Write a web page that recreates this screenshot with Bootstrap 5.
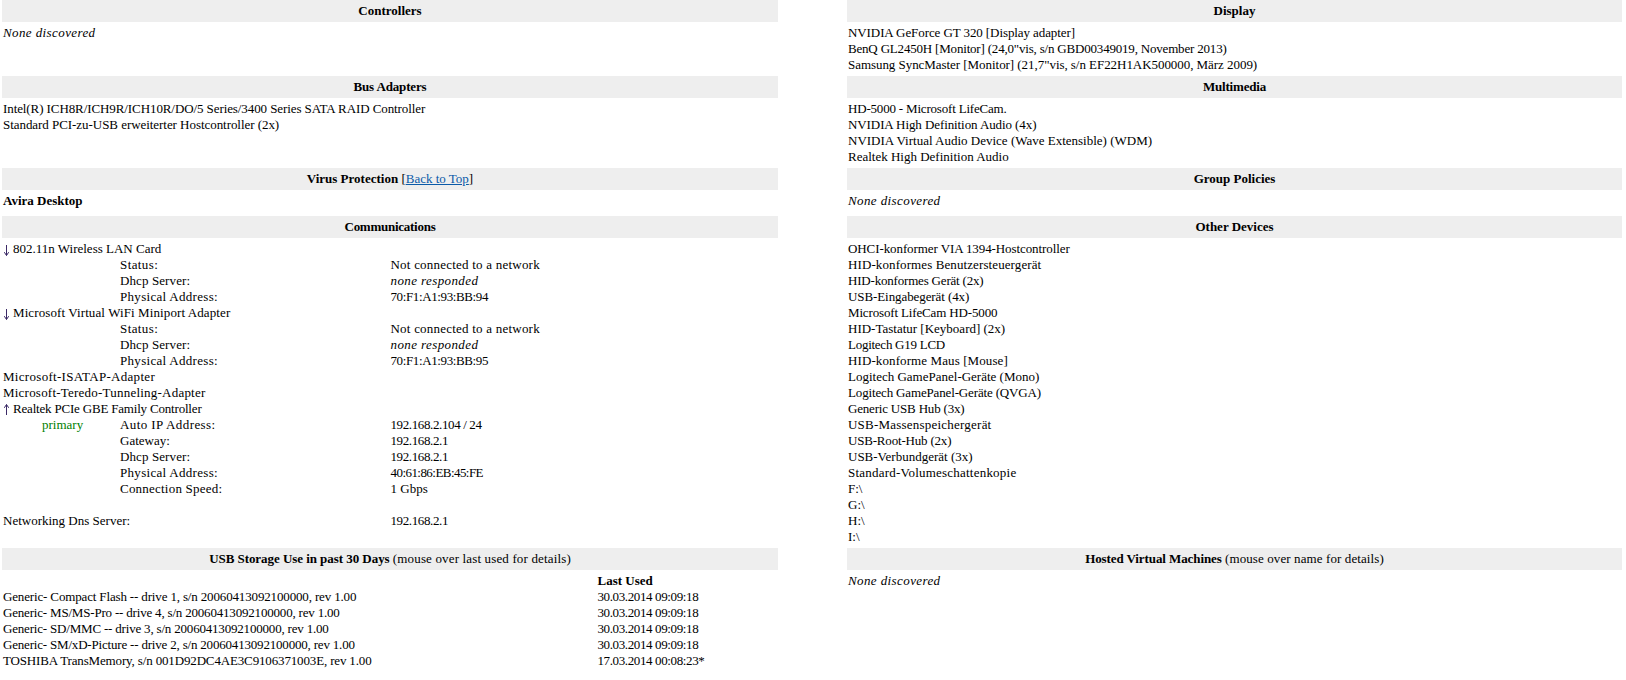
<!DOCTYPE html>
<html lang="en">
<head>
<meta charset="utf-8">
<title>System Information</title>
<link href="https://cdn.jsdelivr.net/npm/bootstrap@5.3.0/dist/css/bootstrap.min.css" rel="stylesheet">
<style>
html, body { background: #fff; }
body { margin: 0; padding: 0; color: #000; font-family: "Liberation Serif", "Times New Roman", serif; font-size: 13px; line-height: 16px; }
.sheet { width: 1626px; }
.pair { display: flex; }
.side-l { width: 776px; margin-left: 2px; }
.side-r { width: 775px; margin-left: 69px; }
.bar { background: #eee; height: 22px; line-height: 22px; text-align: center; }
.bar a { color: #0b5aa8; }
.body-cell { padding: 3px 1px; }
.tall { padding-bottom: 7px; }
.grid-comm { display: grid; grid-template-columns: 39px 78px 270.5px 1fr; }
.grid-comm > div { min-height: 16px; white-space: nowrap; }
.full { grid-column: 1 / -1; }
.span-three { grid-column: 1 / 4; }
.grid-usb { display: grid; grid-template-columns: 594.5px 1fr; }
.arrow-d, .arrow-u { width: 7px; height: 11px; margin-right: 3px; stroke: #3b2a66; fill: none; stroke-width: 1; }
svg.arrow-d { vertical-align: -3px; }
svg.arrow-u { vertical-align: -2px; }
.prim { color: #008000; }
.sp-p4 { letter-spacing: .4px; }
.sp-p3 { letter-spacing: .3px; }
.sp-p2 { letter-spacing: .22px; }
.sp-p15 { letter-spacing: .15px; }
.sp-p1 { letter-spacing: .1px; }
.sp-n05 { letter-spacing: -.05px; }
.sp-n1 { letter-spacing: -.09px; }
.sp-n15 { letter-spacing: -.15px; }
.sp-n2 { letter-spacing: -.19px; }
.sp-n3 { letter-spacing: -.26px; }
.sp-n4 { letter-spacing: -.38px; }
.sp-n5 { letter-spacing: -.55px; }
</style>
</head>
<body>
<div class="sheet">
  <div class="pair">
    <div class="side-l bar fw-bold">Controllers</div>
    <div class="side-r bar fw-bold">Display</div>
  </div>
  <div class="pair">
    <div class="side-l body-cell"><em class="sp-p4">None discovered</em></div>
    <div class="side-r body-cell">
      <div class="sp-n1">NVIDIA GeForce GT 320 [Display adapter]</div>
      <div class="sp-n2">BenQ GL2450H [Monitor] (24,0"vis, s/n GBD00349019, November 2013)</div>
      <div class="sp-n05">Samsung SyncMaster [Monitor] (21,7"vis, s/n EF22H1AK500000, März 2009)</div>
    </div>
  </div>
  <div class="pair">
    <div class="side-l bar fw-bold"><span class="sp-n15">Bus Adapters</span></div>
    <div class="side-r bar fw-bold"><span class="sp-n2">Multimedia</span></div>
  </div>
  <div class="pair">
    <div class="side-l body-cell">
      <div class="sp-n1">Intel(R) ICH8R/ICH9R/ICH10R/DO/5 Series/3400 Series SATA RAID Controller</div>
      <div class="sp-n05">Standard PCI-zu-USB erweiterter Hostcontroller (2x)</div>
    </div>
    <div class="side-r body-cell">
      <div class="sp-n2">HD-5000 - Microsoft LifeCam.</div>
      <div class="sp-n1">NVIDIA High Definition Audio (4x)</div>
      <div>NVIDIA Virtual Audio Device (Wave Extensible) (WDM)</div>
      <div>Realtek High Definition Audio</div>
    </div>
  </div>
  <div class="pair">
    <div class="side-l bar"><b>Virus Protection</b> [<a href="#">Back to Top</a>]</div>
    <div class="side-r bar fw-bold">Group Policies</div>
  </div>
  <div class="pair">
    <div class="side-l body-cell tall fw-bold">Avira Desktop</div>
    <div class="side-r body-cell tall"><em class="sp-p4">None discovered</em></div>
  </div>
  <div class="pair">
    <div class="side-l bar fw-bold"><span class="sp-n3">Communications</span></div>
    <div class="side-r bar fw-bold">Other Devices</div>
  </div>
  <div class="pair">
    <div class="side-l body-cell">
      <div class="grid-comm">
        <div class="full"><svg class="arrow-d" viewBox="0 0 7 11"><path d="M3.5 0V10.5M1.3 7.2L3.5 10.5L5.7 7.2"/></svg>802.11n Wireless LAN Card</div>
        <div></div><div></div><div class="sp-p4">Status:</div><div class="sp-p2">Not connected to a network</div>
        <div></div><div></div><div class="sp-p1">Dhcp Server:</div><div><em class="sp-p4">none responded</em></div>
        <div></div><div></div><div class="sp-p3">Physical Address:</div><div class="sp-n4">70:F1:A1:93:BB:94</div>
        <div class="full"><svg class="arrow-d" viewBox="0 0 7 11"><path d="M3.5 0V10.5M1.3 7.2L3.5 10.5L5.7 7.2"/></svg><span class="sp-p1">Microsoft Virtual WiFi Miniport Adapter</span></div>
        <div></div><div></div><div class="sp-p4">Status:</div><div class="sp-p2">Not connected to a network</div>
        <div></div><div></div><div class="sp-p1">Dhcp Server:</div><div><em class="sp-p4">none responded</em></div>
        <div></div><div></div><div class="sp-p3">Physical Address:</div><div class="sp-n4">70:F1:A1:93:BB:95</div>
        <div class="full sp-p3">Microsoft-ISATAP-Adapter</div>
        <div class="full sp-p2">Microsoft-Teredo-Tunneling-Adapter</div>
        <div class="full"><svg class="arrow-u" viewBox="0 0 7 11"><path d="M3.5 11V.5M1.3 3.8L3.5 .5L5.7 3.8"/></svg><span class="sp-n2">Realtek PCIe GBE Family Controller</span></div>
        <div></div><div class="prim">primary</div><div class="sp-p4">Auto IP Address:</div><div class="sp-n4">192.168.2.104 / 24</div>
        <div></div><div></div><div>Gateway:</div><div class="sp-n4">192.168.2.1</div>
        <div></div><div></div><div class="sp-p1">Dhcp Server:</div><div class="sp-n4">192.168.2.1</div>
        <div></div><div></div><div class="sp-p3">Physical Address:</div><div class="sp-n5">40:61:86:EB:45:FE</div>
        <div></div><div></div><div class="sp-p2">Connection Speed:</div><div>1 Gbps</div>
        <div class="full"></div>
        <div class="span-three">Networking Dns Server:</div><div class="sp-n4">192.168.2.1</div>
      </div>
    </div>
    <div class="side-r body-cell">
      <div class="sp-n1">OHCI-konformer VIA 1394-Hostcontroller</div>
      <div class="sp-p1">HID-konformes Benutzersteuergerät</div>
      <div class="sp-n2">HID-konformes Gerät (2x)</div>
      <div class="sp-n1">USB-Eingabegerät (4x)</div>
      <div class="sp-n15">Microsoft LifeCam HD-5000</div>
      <div>HID-Tastatur [Keyboard] (2x)</div>
      <div class="sp-n3">Logitech G19 LCD</div>
      <div class="sp-p1">HID-konforme Maus [Mouse]</div>
      <div>Logitech GamePanel-Geräte (Mono)</div>
      <div class="sp-n15">Logitech GamePanel-Geräte (QVGA)</div>
      <div class="sp-n2">Generic USB Hub (3x)</div>
      <div class="sp-p2">USB-Massenspeichergerät</div>
      <div class="sp-n2">USB-Root-Hub (2x)</div>
      <div>USB-Verbundgerät (3x)</div>
      <div class="sp-p2">Standard-Volumeschattenkopie</div>
      <div>F:\</div>
      <div>G:\</div>
      <div>H:\</div>
      <div>I:\</div>
    </div>
  </div>
  <div class="pair">
    <div class="side-l bar"><b class="sp-n05">USB Storage Use in past 30 Days</b> <span class="sp-p15">(mouse over last used for details)</span></div>
    <div class="side-r bar"><b class="sp-n1">Hosted Virtual Machines</b> <span class="sp-p1">(mouse over name for details)</span></div>
  </div>
  <div class="pair">
    <div class="side-l body-cell">
      <div class="grid-usb">
        <div></div><div class="fw-bold">Last Used</div>
        <div class="sp-n15">Generic- Compact Flash -- drive 1, s/n 20060413092100000, rev 1.00</div><div class="sp-n4">30.03.2014 09:09:18</div>
        <div class="sp-n2">Generic- MS/MS-Pro -- drive 4, s/n 20060413092100000, rev 1.00</div><div class="sp-n4">30.03.2014 09:09:18</div>
        <div class="sp-n2">Generic- SD/MMC -- drive 3, s/n 20060413092100000, rev 1.00</div><div class="sp-n4">30.03.2014 09:09:18</div>
        <div class="sp-n2">Generic- SM/xD-Picture -- drive 2, s/n 20060413092100000, rev 1.00</div><div class="sp-n4">30.03.2014 09:09:18</div>
        <div class="sp-n15">TOSHIBA TransMemory, s/n 001D92DC4AE3C9106371003E, rev 1.00</div><div class="sp-n4">17.03.2014 00:08:23*</div>
      </div>
    </div>
    <div class="side-r body-cell"><em class="sp-p4">None discovered</em></div>
  </div>
</div>
<script src="https://cdn.jsdelivr.net/npm/bootstrap@5.3.0/dist/js/bootstrap.bundle.min.js"></script>
</body>
</html>
